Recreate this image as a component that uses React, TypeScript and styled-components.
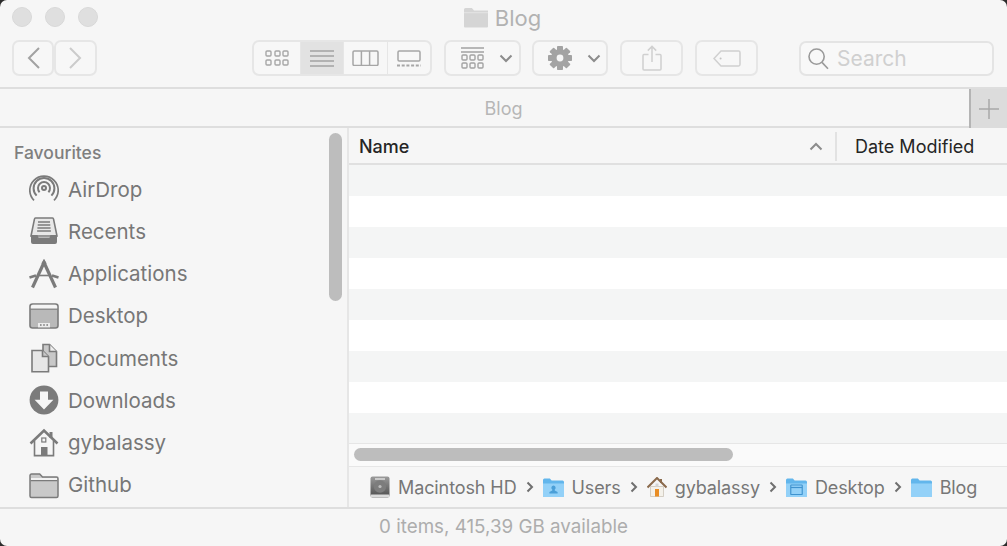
import React from "react";
import styled, { createGlobalStyle } from "styled-components";

const GlobalStyle = createGlobalStyle`
  html, body {
    margin: 0;
    padding: 0;
    background: #2c2c2c;
    overflow: hidden;
  }
  * {
    box-sizing: border-box;
  }
`;

const FONT = `Inter, "Liberation Sans", sans-serif`;
const ICON = "#7b7b7b";

function AirDropIcon() {
  return (
    <svg width="30" height="30" viewBox="0 0 30 30" fill="none" stroke={ICON}>
      <circle cx="15" cy="14" r="2" strokeWidth="2" />
      <path d="M10.6 18.2a6 6 0 1 1 8.8 0" strokeWidth="2" />
      <path d="M7.6 21.6a10.4 10.4 0 1 1 14.8 0" strokeWidth="2" />
      <path d="M5 26.4a14.2 14.2 0 1 1 20 0" strokeWidth="1.7" />
    </svg>
  );
}

function RecentsIcon() {
  return (
    <svg width="30" height="30" viewBox="0 0 30 30" fill="none">
      <path d="M6.500 2h17a1 1 0 0 1 1 .9L28 20H2L5.500 2.900a1 1 0 0 1 1-.9z" fill="#e8e8e8" stroke={ICON} strokeWidth="1.600" />
      <path d="M9 6h12M8.700 9h12.600M8.400 12h13.200M8.100 15h13.800" stroke={ICON} strokeWidth="1.400" />
      <path d="M2 19h6.500l1 2.500h11l1-2.500H28v7a2 2 0 0 1-2 2H4a2 2 0 0 1-2-2z" fill={ICON} />
    </svg>
  );
}

function ApplicationsIcon() {
  return (
    <svg width="30" height="30" viewBox="0 0 30 30" fill="none" stroke={ICON}>
      <path d="M15 3.500 26.500 28.500" strokeWidth="3.200" />
      <path d="M15 3.500 3.500 28.500" strokeWidth="3.200" />
      <path d="M12.800 4.500 15 .5l2.200 4" fill={ICON} strokeWidth="1" />
      <path d="M.5 18.500 7 16.500M23 16.500l6.500 2" strokeWidth="2.600" />
      <path d="M8 16.500h14" strokeWidth="1.600" />
    </svg>
  );
}

function DesktopIcon() {
  return (
    <svg width="30" height="30" viewBox="0 0 30 30" fill="none">
      <rect x="1" y="3" width="28" height="24" rx="2.5" fill="#b9b9b9" stroke={ICON} strokeWidth="1.6" />
      <path d="M1.5 8h27" stroke={ICON} strokeWidth="1.4" />
      <path d="M1.8 5.5a2 2 0 0 1 2-1.8h22.4a2 2 0 0 1 2 1.8V7.4H1.8z" fill="#f5f5f5" />
      <rect x="9" y="22" width="12" height="4.4" fill="#ececec" />
      <path d="M11 24h1.6M14.2 24h1.6M17.4 24h1.6" stroke={ICON} strokeWidth="1.6" />
    </svg>
  );
}

function DocumentsIcon() {
  return (
    <svg width="30" height="30" viewBox="0 0 30 30" fill="none" stroke={ICON} strokeWidth="1.6">
      <path d="M14 1.5h6.5l7 7v15H14z" fill="#c8c8c8" />
      <path d="M20.5 1.5v7h7" fill="#ededed" />
      <path d="M3 7.5h10.5l6 6v15.2H3z" fill="#e6e6e6" />
      <path d="M13.5 7.5v6h6" fill="#c8c8c8" />
    </svg>
  );
}

function DownloadsIcon() {
  return (
    <svg width="30" height="30" viewBox="0 0 30 30">
      <circle cx="15" cy="15" r="14.4" fill={ICON} />
      <path d="M11 6.5h8v8.2h5.4L15 24.4 5.6 14.7H11z" fill="#f6f6f6" />
    </svg>
  );
}

function HomeIcon() {
  return (
    <svg width="30" height="30" viewBox="0 0 30 30" fill="none" stroke={ICON}>
      <path d="M1.5 15.5 15 2.5l13.5 13" strokeWidth="2.6" />
      <path d="M22 4v6" strokeWidth="3" />
      <path d="M5.5 13v14.6h19V13" strokeWidth="1.6" fill="#f6f6f6" />
      <rect x="12.8" y="10" width="4" height="4" strokeWidth="1.2" />
      <rect x="12" y="19" width="6.5" height="9" fill={ICON} stroke="none" />
    </svg>
  );
}

function FolderIcon({ fill = "#c9c9c9", stroke = ICON }: { fill?: string; stroke?: string }) {
  return (
    <svg width="30" height="30" viewBox="0 0 30 30" fill="none">
      <path
        d="M1 26V5.5A1.5 1.5 0 0 1 2.5 4h8.2l2.8 3H27.5A1.5 1.5 0 0 1 29 8.5V26a1.5 1.5 0 0 1-1.5 1.5h-25A1.5 1.5 0 0 1 1 26z"
        fill={fill}
        stroke={stroke}
        strokeWidth="1.5"
      />
      <path d="M1.6 10.6h26.8" stroke={stroke} strokeWidth="1.3" />
      <path d="M2 8h26v2H2z" fill="#f2f2f2" />
    </svg>
  );
}

function TitleFolder() {
  return (
    <svg width="25" height="20" viewBox="0 0 25 20">
      <path d="M0 1.5A1.5 1.5 0 0 1 1.5 0h6.4l2.1 2.6h14V18.6a1 1 0 0 1-1 1H1a1 1 0 0 1-1-1z" fill="#d5d5d5" />
      <path d="M0 4.2h24v1H0z" fill="#e4e4e4" />
    </svg>
  );
}

function ChevronSmall({ up }: { up?: boolean }) {
  return (
    <svg width="14" height="9" viewBox="0 0 14 9" fill="none" stroke="#8c8c8c" strokeWidth="2">
      <path d={up ? "M1.5 7.5 7 2l5.5 5.5" : "M1.5 1.5 7 7l5.5-5.5"} />
    </svg>
  );
}

function GridIcon() {
  return (
    <svg width="24" height="16" viewBox="0 0 24 16" fill="none" stroke="#a6a6a6" strokeWidth="1.4">
      {[1, 10, 18].map((x) =>
        [1, 10].map((y) => <rect key={`${x}-${y}`} x={x} y={y} width="5" height="5" rx="1" />)
      )}
    </svg>
  );
}

function ListIcon() {
  return (
    <svg width="24" height="17" viewBox="0 0 24 17" fill="none" stroke="#a3a3a3" strokeWidth="1.4">
      <path d="M0 1h24M0 6h24M0 11h24M0 16h24" />
    </svg>
  );
}

function ColumnsIcon() {
  return (
    <svg width="27" height="16" viewBox="0 0 27 16" fill="none" stroke="#a6a6a6" strokeWidth="1.5">
      <rect x="1" y="1" width="25" height="14.5" rx="1.2" />
      <path d="M9.4 1v14.5M17.6 1v14.5" />
    </svg>
  );
}

function GalleryIcon() {
  return (
    <svg width="24" height="17" viewBox="0 0 24 17" fill="none" stroke="#a6a6a6">
      <rect x="1" y="1" width="22" height="10" rx="1.2" strokeWidth="1.5" />
      <path d="M0 15.5h24" strokeWidth="2.2" strokeDasharray="3 1.7" />
    </svg>
  );
}

function GroupIcon() {
  return (
    <svg width="23" height="22" viewBox="0 0 23 22" fill="none" stroke="#a3a3a3" strokeWidth="1.4">
      <path d="M0 1h23M0 5h23" />
      <rect x="1" y="8" width="5" height="5" rx="1" />
      <rect x="9" y="8" width="5" height="5" rx="1" />
      <rect x="17" y="8" width="5" height="5" rx="1" />
      <rect x="1" y="16" width="5" height="5" rx="1" />
      <rect x="9" y="16" width="5" height="5" rx="1" />
      <rect x="17" y="16" width="5" height="5" rx="1" />
    </svg>
  );
}

function GearIcon() {
  return (
    <svg width="24" height="24" viewBox="0 0 24 24">
      <g fill="#a3a3a3">
        {[0, 45, 90, 135, 180, 225, 270, 315].map((a) => (
          <rect key={a} x="9" y="0" width="6" height="6" rx="0.8" transform={`rotate(${a} 12 12)`} />
        ))}
        <circle cx="12" cy="12" r="9" />
      </g>
      <circle cx="12" cy="12" r="3.4" fill="#f6f6f6" />
    </svg>
  );
}

function ShareIcon() {
  return (
    <svg width="20" height="26" viewBox="0 0 20 26" fill="none" stroke="#d0d0d0" strokeWidth="1.5">
      <path d="M6.5 9.5H2a1 1 0 0 0-1 1V24a1 1 0 0 0 1 1h16a1 1 0 0 0 1-1V10.5a1 1 0 0 0-1-1h-4.5" />
      <path d="M10 17V1.5M5.8 5.6 10 1.4l4.2 4.2" />
    </svg>
  );
}

function TagIcon() {
  return (
    <svg width="28" height="17" viewBox="0 0 28 17" fill="none" stroke="#d0d0d0" strokeWidth="1.5">
      <path d="M8 1h17.6A1.4 1.4 0 0 1 27 2.4v12.2a1.4 1.4 0 0 1-1.4 1.4H8L1 8.5z" />
      <circle cx="7.6" cy="8.5" r="1" fill="#c4c4c4" stroke="none" />
    </svg>
  );
}

function SearchIcon() {
  return (
    <svg width="21" height="22" viewBox="0 0 21 22" fill="none" stroke="#9a9a9a" strokeWidth="1.6">
      <circle cx="8.6" cy="8.6" r="7.6" />
      <path d="m14 14.4 6 6.4" />
    </svg>
  );
}

function DiskIcon() {
  return (
    <svg width="20" height="22" viewBox="0 0 20 22">
      <defs>
        <linearGradient id="disk" x1="0" y1="0" x2="0" y2="1">
          <stop offset="0" stopColor="#9b9b9b" />
          <stop offset="1" stopColor="#4c4c4c" />
        </linearGradient>
      </defs>
      <rect x="0.5" y="0.5" width="19" height="21" rx="2" fill="url(#disk)" />
      <path d="M5 3h10" stroke="#dcdcdc" strokeWidth="1.5" />
      <circle cx="10" cy="10.5" r="6.2" fill="#7d7d7d" />
      <circle cx="10" cy="10.5" r="1.6" fill="#bdbdbd" />
      <rect x="0.5" y="18.4" width="19" height="3" rx="1" fill="#dbdbdb" />
    </svg>
  );
}

function BlueFolder({ kind }: { kind?: "user" | "desktop" }) {
  return (
    <svg width="21" height="19" viewBox="0 0 22 19" preserveAspectRatio="none">
      <path d="M0 2a1.5 1.5 0 0 1 1.5-1.5h5.7L9 2.5h11.5A1.5 1.5 0 0 1 22 4v13.5a1.5 1.5 0 0 1-1.5 1.5h-19A1.5 1.5 0 0 1 0 17.500z" fill="#62b6ec" />
      <path d="M0 5.500h22v12a1.500 1.500 0 0 1-1.500 1.500h-19A1.500 1.500 0 0 1 0 17.500z" fill="#93d1f8" />
      {kind === "user" && (
        <path d="M11 7.500a2.200 2.200 0 0 1 1.300 4v1l3 1.500v1.500H6.700V14l3-1.500v-1a2.200 2.200 0 0 1 1.300-4z" fill="#4a9fd8" />
      )}
      {kind === "desktop" && (
        <g fill="none" stroke="#3f93cf" strokeWidth="1.200">
          <rect x="5" y="7" width="12" height="9.500" rx="0.600" />
          <path d="M5 9.500h12" />
        </g>
      )}
    </svg>
  );
}

function ColorHome() {
  return (
    <svg width="20" height="20" viewBox="0 0 20 20">
      <path d="M3.500 9.500h13V19.500h-13z" fill="#f4f1ea" stroke="#c5bdb0" strokeWidth="0.700" />
      <path d="M0.500 10.500 10 1l9.500 9.500" fill="none" stroke="#8a6a4c" strokeWidth="2" />
      <path d="M14 2v4" stroke="#8a6a4c" strokeWidth="2" />
      <rect x="8" y="12" width="4" height="7.500" fill="#e98d24" />
      <rect x="8.500" y="6.500" width="3" height="3" fill="#d5d5d5" />
    </svg>
  );
}

const Window = styled.div`
  width: 1007px;
  height: 546px;
  display: flex;
  flex-direction: column;
  background: #f6f6f6;
  border-radius: 7px;
  overflow: hidden;
  font-family: ${FONT};
`;

const TitleArea = styled.header`
  height: 89px;
  flex: none;
  padding: 7px 12px 0;
  border-bottom: 2px solid #dedede;
`;

const TitleRow = styled.div`
  position: relative;
  height: 22px;
  display: flex;
  align-items: center;
  justify-content: center;
  gap: 6px;
  padding-right: 2px;
`;

const Lights = styled.div`
  position: absolute;
  left: 0;
  top: 0;
  display: flex;
  gap: 13px;
`;

const Light = styled.span`
  width: 20px;
  height: 20px;
  border-radius: 50%;
  background: #dfdfdf;
  border: 1px solid #d8d8d8;
`;

const TitleText = styled.span`
  font-size: 22px;
  line-height: 22px;
  color: #b2b2b2;
`;

const Toolbar = styled.div`
  margin-top: 11px;
  height: 36px;
  display: flex;
  align-items: stretch;
`;

const ToolButton = styled.div<{ $width: number; $gap?: number; $menu?: boolean }>`
  width: ${(p) => p.$width}px;
  margin-left: ${(p) => p.$gap ?? 0}px;
  display: flex;
  align-items: center;
  justify-content: center;
  gap: 15px;
  padding-left: ${(p) => (p.$menu ? 8 : 0)}px;
  background: #f7f7f7;
  border: 2px solid #e6e6e6;
  border-radius: 7px;
`;

const Segmented = styled.div`
  margin-left: 155px;
  width: 180px;
  display: flex;
  background: #f7f7f7;
  border: 2px solid #e6e6e6;
  border-radius: 7px;
  overflow: hidden;
`;

const Segment = styled.div<{ $active?: boolean; $width: number }>`
  width: ${(p) => p.$width}px;
  display: flex;
  align-items: center;
  justify-content: center;
  background: ${(p) => (p.$active ? "#e2e2e2" : "transparent")};
  & + & {
    border-left: 1px solid #e6e6e6;
  }
`;

const SearchBox = styled.div`
  margin-left: 41px;
  width: 195px;
  margin-top: 1px;
  display: flex;
  align-items: center;
  gap: 8px;
  padding-left: 7px;
  background: #f8f8f8;
  border: 2px solid #e4e4e4;
  border-radius: 7px;
  color: #d0d0d0;
  font-size: 21px;
`;

const TabBar = styled.div`
  height: 39px;
  flex: none;
  display: flex;
  border-bottom: 2px solid #dedede;
`;

const TabLabel = styled.div`
  flex: 1;
  display: flex;
  align-items: center;
  justify-content: center;
  padding: 1px 0 0 38px;
  font-size: 18px;
  color: #b6b6b6;
`;

const NewTab = styled.div`
  width: 38px;
  display: flex;
  align-items: center;
  justify-content: center;
  background: #dcdcdc;
  border-left: 2px solid #b4b4b4;
  margin-bottom: -2px;
`;

const Main = styled.div`
  flex: 1;
  min-height: 0;
  display: flex;
`;

const Sidebar = styled.aside`
  position: relative;
  width: 349px;
  flex: none;
  padding: 14px 0 0 14px;
  border-right: 2px solid #e6e6e6;
`;

const SidebarTitle = styled.div`
  height: 22px;
  font-size: 17.5px;
  line-height: 22px;
  font-weight: 500;
  color: #7f7f7f;
`;

const SidebarList = styled.div`
  margin-top: 4px;
  padding-left: 15px;
  display: flex;
  flex-direction: column;
`;

const SidebarItem = styled.div`
  height: 42.25px;
  display: flex;
  align-items: center;
  gap: 9px;
  font-size: 20.5px;
  color: #777;
`;

const SideThumb = styled.div`
  position: absolute;
  left: 329px;
  top: 5px;
  width: 13px;
  height: 168px;
  border-radius: 7px;
  background: #bdbdbd;
`;

const Content = styled.section`
  flex: 1;
  min-width: 0;
  display: flex;
  flex-direction: column;
`;

const TableHead = styled.div`
  height: 37px;
  flex: none;
  display: flex;
  align-items: center;
  padding: 2px 0 0 10px;
  border-bottom: 2px solid #e0e0e0;
  font-size: 18px;
  color: #252525;
`;

const NameHead = styled.div`
  width: 478px;
  display: flex;
  align-items: center;
  justify-content: space-between;
  padding-right: 12px;
  font-weight: 500;
  border-right: 2px solid #e2e2e2;
  height: 29px;
`;

const DateHead = styled.div`
  padding-left: 18px;
`;

const Rows = styled.div`
  flex: 1;
  min-height: 0;
  overflow: hidden;
`;

const Row = styled.div<{ $odd: boolean }>`
  height: 31px;
  background: ${(p) => (p.$odd ? "#f4f5f5" : "#ffffff")};
`;

const HScroll = styled.div`
  height: 24px;
  flex: none;
  padding: 4px 0 0 5px;
  background: #fafafa;
  border-top: 1px solid #e6e6e6;
  border-bottom: 1px solid #e6e6e6;
`;

const HThumb = styled.div`
  width: 379px;
  height: 13px;
  border-radius: 7px;
  background: #bdbdbd;
`;

const PathBar = styled.div`
  height: 40px;
  flex: none;
  display: flex;
  align-items: center;
  padding-left: 21px;
  font-size: 18px;
  letter-spacing: -0.1px;
  color: #777;
`;

const Crumb = styled.div`
  display: flex;
  align-items: center;
  gap: 8px;
`;

const CrumbSep = styled.span`
  width: 26px;
  display: flex;
  justify-content: center;
`;

const StatusBar = styled.footer`
  height: 39px;
  flex: none;
  display: flex;
  align-items: center;
  justify-content: center;
  padding-bottom: 2px;
  border-top: 2px solid #dedede;
  font-size: 18.8px;
  color: #adadad;
`;

const favourites: [string, React.ReactNode][] = [
  ["AirDrop", <AirDropIcon />],
  ["Recents", <RecentsIcon />],
  ["Applications", <ApplicationsIcon />],
  ["Desktop", <DesktopIcon />],
  ["Documents", <DocumentsIcon />],
  ["Downloads", <DownloadsIcon />],
  ["gybalassy", <HomeIcon />],
  ["Github", <FolderIcon />],
];

const crumbs: [string, React.ReactNode][] = [
  ["Macintosh HD", <DiskIcon />],
  ["Users", <BlueFolder kind="user" />],
  ["gybalassy", <ColorHome />],
  ["Desktop", <BlueFolder kind="desktop" />],
  ["Blog", <BlueFolder />],
];

function CrumbChevron() {
  return (
    <svg width="8" height="12" viewBox="0 0 8 12" fill="none" stroke="#6f6f6f" strokeWidth="2">
      <path d="m1.500 1.500 4.500 4.500-4.500 4.500" />
    </svg>
  );
}

export default function App() {
  return (
    <>
      <GlobalStyle />
      <Window>
        <TitleArea>
          <TitleRow>
            <Lights>
              <Light />
              <Light />
              <Light />
            </Lights>
            <TitleFolder />
            <TitleText>Blog</TitleText>
          </TitleRow>
          <Toolbar>
            <ToolButton $width={42}>
              <svg width="13" height="22" viewBox="0 0 13 22" fill="none" stroke="#a2a2a2" strokeWidth="2">
                <path d="M12 1 2 11l10 10" />
              </svg>
            </ToolButton>
            <ToolButton $width={43}>
              <svg width="13" height="22" viewBox="0 0 13 22" fill="none" stroke="#cbcbcb" strokeWidth="2">
                <path d="m1 1 10 10L1 21" />
              </svg>
            </ToolButton>
            <Segmented>
              <Segment $width={46}>
                <GridIcon />
              </Segment>
              <Segment $active $width={43}>
                <ListIcon />
              </Segment>
              <Segment $width={44}>
                <ColumnsIcon />
              </Segment>
              <Segment $width={43}>
                <GalleryIcon />
              </Segment>
            </Segmented>
            <ToolButton $width={77} $gap={12} $menu>
              <GroupIcon />
              <ChevronSmall />
            </ToolButton>
            <ToolButton $width={76} $gap={11} $menu>
              <GearIcon />
              <ChevronSmall />
            </ToolButton>
            <ToolButton $width={63} $gap={12}>
              <ShareIcon />
            </ToolButton>
            <ToolButton $width={63} $gap={12}>
              <TagIcon />
            </ToolButton>
            <SearchBox>
              <SearchIcon />
              Search
            </SearchBox>
          </Toolbar>
        </TitleArea>
        <TabBar>
          <TabLabel>Blog</TabLabel>
          <NewTab>
            <svg width="20" height="20" viewBox="0 0 20 20" stroke="#a8a8a8" strokeWidth="1.500">
              <path d="M10 0v20M0 10h20" />
            </svg>
          </NewTab>
        </TabBar>
        <Main>
          <Sidebar>
            <SidebarTitle>Favourites</SidebarTitle>
            <SidebarList>
              {favourites.map(([label, icon]) => (
                <SidebarItem key={label}>
                  {icon}
                  {label}
                </SidebarItem>
              ))}
            </SidebarList>
            <SideThumb />
          </Sidebar>
          <Content>
            <TableHead>
              <NameHead>
                Name
                <ChevronSmall up />
              </NameHead>
              <DateHead>Date Modified</DateHead>
            </TableHead>
            <Rows>
              {Array.from({ length: 9 }, (_, i) => (
                <Row key={i} $odd={i % 2 === 0} />
              ))}
            </Rows>
            <HScroll>
              <HThumb />
            </HScroll>
            <PathBar>
              {crumbs.map(([label, icon], i) => (
                <React.Fragment key={label}>
                  <Crumb>
                    {icon}
                    {label}
                  </Crumb>
                  {i < crumbs.length - 1 && (
                    <CrumbSep>
                      <CrumbChevron />
                    </CrumbSep>
                  )}
                </React.Fragment>
              ))}
            </PathBar>
          </Content>
        </Main>
        <StatusBar>0 items, 415,39 GB available</StatusBar>
      </Window>
    </>
  );
}
